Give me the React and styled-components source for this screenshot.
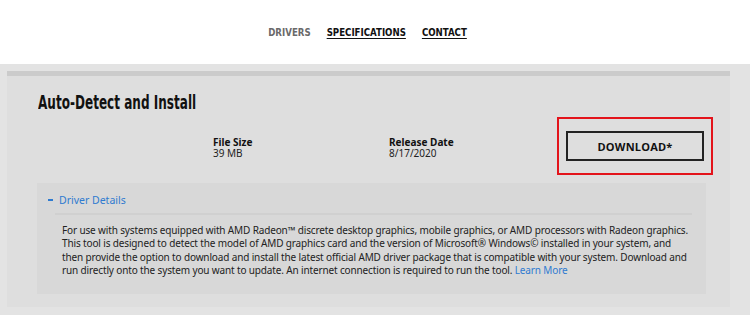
import React from 'react'
import styled, { createGlobalStyle } from 'styled-components'

const Global = createGlobalStyle`
    body{
        margin:0;
        background-color:#e3e3e3;
        font-family:"Noto Sans","Open Sans",sans-serif;
    }
`
const Header = styled.div`
    height:64px;
    background-color:#fff;
    display:flex;
    justify-content:center;
    align-items:center;
    gap:16px;
    padding-right:15px;
    box-sizing:border-box;
`
const NavLink = styled.a`
    font-family:"DejaVu Sans Condensed","DejaVu Sans",sans-serif;
    font-weight:bold;
    font-size:9.6px;
    color:${p => p.active ? '#6a6a6a' : '#111'};
    text-decoration:${p => p.active ? 'none' : 'underline'};
    text-decoration-thickness:1px;
    text-underline-offset:2px;
    cursor:pointer;
`
const Page = styled.div`
    padding:7px 20px 8px 7px;
`
const Card = styled.div`
    width:723px;
    box-sizing:border-box;
    background-color:#dedede;
    border-top:5px solid #cbcbcb;
    padding:14px 24px 13px 30px;
`
const Title = styled.h2`
    margin:0 0 0 1px;
    height:24px;
    font-family:"DejaVu Sans Condensed","DejaVu Sans",sans-serif;
    font-weight:bold;
    font-size:20px;
    line-height:24px;
    color:#111;
    white-space:nowrap;
    span{
        display:inline-block;
        transform:scaleX(0.67);
        transform-origin:left center;
    }
`
const InfoRow = styled.div`
    display:grid;
    grid-template-columns:176px 168px auto;
    align-items:center;
    padding-left:176px;
    margin-top:3px;
`
const Info = styled.div`
    font-size:10px;
    line-height:11px;
    color:#222;
    padding-top:3px;
    b{
        display:block;
        color:#111;
    }
`
const Highlight = styled.div`
    width:156px;
    height:58px;
    box-sizing:border-box;
    border:2px solid #e3131b;
    padding:12px 7px;
`
const DownloadButton = styled.button`
    width:138px;
    height:30px;
    border:2px solid #222;
    background:transparent;
    font-family:"Open Sans","Noto Sans",sans-serif;
    font-weight:bold;
    font-size:11px;
    color:#111;
    cursor:pointer;
    letter-spacing:0.2px;
`
const Details = styled.div`
    margin-top:8px;
    background-color:#d8d8d8;
    padding:10px 14px 17px 18px;
`
const Toggle = styled.a`
    display:flex;
    align-items:center;
    gap:6px;
    margin-left:-7px;
    font-size:10.5px;
    line-height:14px;
    color:#2f7bd0;
    cursor:pointer;
    &::before{
        content:'';
        width:5px;
        height:2px;
        background-color:#2f7bd0;
    }
`
const Text = styled.p`
    margin:6px 0 0;
    border-top:2px solid #d0d0d0;
    padding:9px 0 0 7px;
    font-size:10px;
    letter-spacing:-0.14px;
    line-height:13.3px;
    color:#222;
    a{
        color:#2f7bd0;
        text-decoration:none;
    }
`

export default function App() {
    return (
        <>
            <Global />
            <Header>
                <NavLink active>DRIVERS</NavLink>
                <NavLink>SPECIFICATIONS</NavLink>
                <NavLink>CONTACT</NavLink>
            </Header>
            <Page>
                <Card>
                    <Title><span>Auto-Detect and Install</span></Title>
                    <InfoRow>
                        <Info><b>File Size</b>39 MB</Info>
                        <Info><b>Release Date</b>8/17/2020</Info>
                        <Highlight>
                            <DownloadButton>DOWNLOAD*</DownloadButton>
                        </Highlight>
                    </InfoRow>
                    <Details>
                        <Toggle>Driver Details</Toggle>
                        <Text>
                            For use with systems equipped with AMD Radeon™ discrete desktop graphics, mobile graphics, or AMD processors with Radeon graphics. This tool is designed to detect the model of AMD graphics card and the version of Microsoft® Windows© installed in your system, and then provide the option to download and install the latest official AMD driver package that is compatible with your system. Download and run directly onto the system you want to update. An internet connection is required to run the tool. <a>Learn More</a>
                        </Text>
                    </Details>
                </Card>
            </Page>
        </>
    )
}
